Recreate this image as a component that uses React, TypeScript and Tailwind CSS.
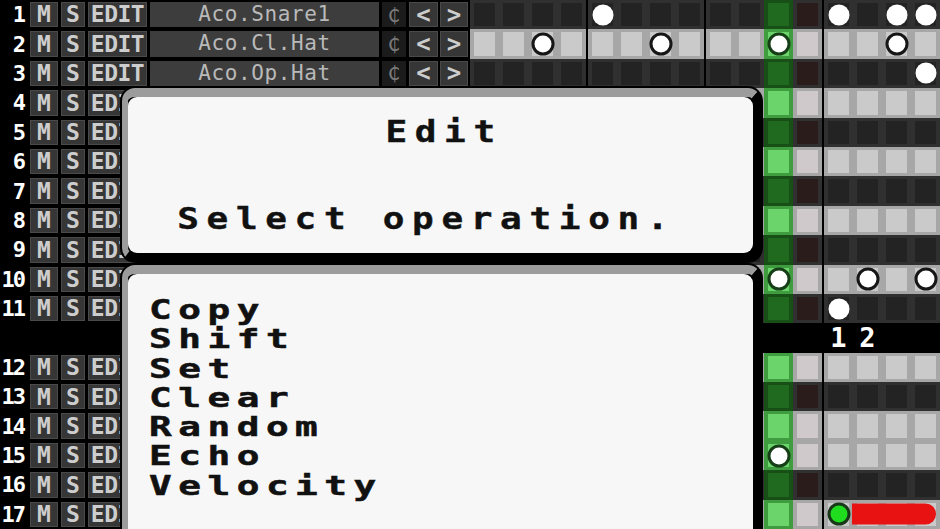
import React from 'react';

type Row = {
  n?: string;
  name?: string;
  light?: boolean;
  notes?: number[];
  gap?: boolean;
  greenNote?: number;
  bar?: boolean;
};

// rows from 4 down sit under the dialog, so only their left buttons show
const rows: Row[] = [
  { n: '1', name: 'Aco.Snare1', light: false, notes: [4, 12, 14, 15] },
  { n: '2', name: 'Aco.Cl.Hat', light: true, notes: [2, 6, 10, 14] },
  { n: '3', name: 'Aco.Op.Hat', light: false, notes: [15] },
  { n: '4', light: true },
  { n: '5', light: false },
  { n: '6', light: true },
  { n: '7', light: false },
  { n: '8', light: true },
  { n: '9', light: false },
  { n: '10', light: true, notes: [10, 13, 15] },
  { n: '11', light: false, notes: [12] },
  { gap: true },
  { n: '12', light: true },
  { n: '13', light: false },
  { n: '14', light: true },
  { n: '15', light: true, notes: [10] },
  { n: '16', light: false },
  { n: '17', light: true, greenNote: 12, bar: true },
];

const mono = "font-['DejaVu_Sans_Mono',monospace]";
const groups = [0, 1, 2, 3];

function Step({ i, light, note, green }: { i: number; light: boolean; note: boolean; green: boolean }) {
  const play = i === 10;
  const next = i === 11;
  const outer = play
    ? light ? 'bg-[#3f9c3f]' : 'bg-[#174f17]'
    : light ? 'bg-[#a7a7a7]' : 'bg-[#303030]';
  const inner = play
    ? light ? 'bg-[#6bd46b]' : 'bg-[#1f6a1f]'
    : next
      ? light ? 'bg-[#d0c9cb]' : 'bg-[#2b1c1c]'
      : light ? 'bg-[#cacaca]' : 'bg-[#232323]';
  return (
    <div className={`relative h-full w-[29px] px-[4px] py-[3px] ${outer}`}>
      <div className={`h-full w-full ${inner}`} />
      {note && (
        <div
          className={`absolute left-1/2 top-1/2 -translate-x-1/2 -translate-y-1/2 rounded-full bg-white ${
            light
              ? `h-[23px] w-[23px] border-[3px] ${play ? 'border-[#173f17] bg-[#f6fff0]' : 'border-[#161616]'}`
              : 'h-[21px] w-[21px]'
          }`}
        />
      )}
      {green && (
        <div className="absolute left-1/2 top-1/2 h-[23px] w-[23px] -translate-x-1/2 -translate-y-1/2 rounded-full border-[3px] border-[#183818] bg-[#1fdc1f]" />
      )}
    </div>
  );
}

function LeftCells({ row }: { row: Row }) {
  const btn = `flex items-center justify-center border border-[#4a4a4a] bg-[#363636] text-[#cdcdcd] ${mono} font-bold`;
  const shown = !!row.name;
  return (
    <div className="flex h-full w-[470px] shrink-0 items-stretch bg-black py-[2px]">
      <div className={`flex w-[29px] items-center justify-end pr-[5px] text-[22px] font-bold tracking-[-2px] text-white ${mono}`}>
        {row.n}
      </div>
      <div className={`ml-[1px] w-[28px] text-[23px] ${btn}`}>M</div>
      <div className={`ml-[3px] w-[24px] text-[23px] ${btn}`}>S</div>
      <div className={`ml-[3px] w-[59px] text-[23px] tracking-[-0.5px] ${btn}`}>EDIT</div>
      <div className={`ml-[3px] flex w-[229px] items-center justify-center bg-[#3d3d3d] text-[21px] tracking-[0.6px] text-[#b9b9b9] ${mono}`}>
        {row.name}
      </div>
      <div className={`ml-[3px] flex w-[24px] items-center justify-center bg-[#1b1b1b] text-[20px] text-[#7a7a7a] ${mono}`}>
        {shown && '₵'}
      </div>
      <div className={`ml-[3px] w-[29px] text-[24px] ${btn}`}>{shown && '<'}</div>
      <div className={`ml-[2px] w-[28px] text-[24px] ${btn}`}>{shown && '>'}</div>
    </div>
  );
}

function SeqRow({ row }: { row: Row }) {
  if (row.gap) {
    return (
      <div className="flex h-full bg-black">
        <div className="w-[470px] shrink-0" />
        <div className={`flex flex-1 items-center pl-[354px] text-[27px] font-bold text-white ${mono}`}>
          <span className="w-[29px] text-center">1</span>
          <span className="w-[29px] text-center">2</span>
        </div>
      </div>
    );
  }
  const light = !!row.light;
  return (
    <div className="flex h-full">
      <LeftCells row={row} />
      <div className="relative flex h-full flex-1 gap-[2px] bg-black">
        {groups.map((g) => (
          <div key={g} className="flex h-full">
            {[0, 1, 2, 3].map((s) => {
              const i = g * 4 + s;
              return (
                <Step
                  key={i}
                  i={i}
                  light={light}
                  note={!!row.notes?.includes(i)}
                  green={row.greenNote === i}
                />
              );
            })}
          </div>
        ))}
        {row.bar && (
          <div className="absolute left-[382px] top-1/2 h-[21px] w-[84px] -translate-y-1/2 rounded-r-full bg-[#e81212]" />
        )}
      </div>
    </div>
  );
}

const big = `${mono} text-[30px] leading-[29.3px] font-bold tracking-[6.4px] text-[#111] scale-x-[1.2] [-webkit-text-stroke:0.4px_#111]`;
const item = `${mono} text-[26px] leading-[29.3px] font-bold tracking-[4.5px] text-[#111] scale-x-[1.45] origin-left [-webkit-text-stroke:0.5px_#111]`;

export default function App() {
  const ops = ['Copy', 'Shift', 'Set', 'Clear', 'Random', 'Echo', 'Velocity'];
  return (
    <div className="relative h-[529px] w-[940px] overflow-hidden bg-black">
      <div className="grid h-[529px] grid-rows-[repeat(18,minmax(0,1fr))]">
        {rows.map((r, idx) => (
          <SeqRow key={idx} row={r} />
        ))}
      </div>

      {/* Edit dialog */}
      <div className="absolute left-[120px] top-[86px] h-[177px] w-[643px] rounded-[15px] bg-black p-[2px]">
        <div className="h-full w-full rounded-[13px] border-b-[8px] border-l-[6px] border-r-[8px] border-t-[9px] border-[#9c9c9c] border-b-black border-r-black">
          <div className="h-full w-full rounded-[9px] bg-[#f7f7f7] pt-[20px]">
            <div className={`${big} origin-center pl-[6px] text-center`}>Edit</div>
            <div className={`${big} mt-[58px] origin-left pl-[41px]`}>Select operation.</div>
          </div>
        </div>
      </div>

      <div className="absolute left-[120px] top-[263px] h-[300px] w-[643px] rounded-[15px] bg-black p-[2px]">
        <div className="h-full w-full rounded-[13px] border-b-[8px] border-l-[6px] border-r-[8px] border-t-[9px] border-[#9c9c9c] border-b-black border-r-black">
          <div className="h-full w-full rounded-[9px] bg-[#f7f7f7] pl-[21px] pt-[22px]">
            {ops.map((o) => (
              <div key={o} className={item}>
                {o}
              </div>
            ))}
          </div>
        </div>
      </div>
    </div>
  );
}
